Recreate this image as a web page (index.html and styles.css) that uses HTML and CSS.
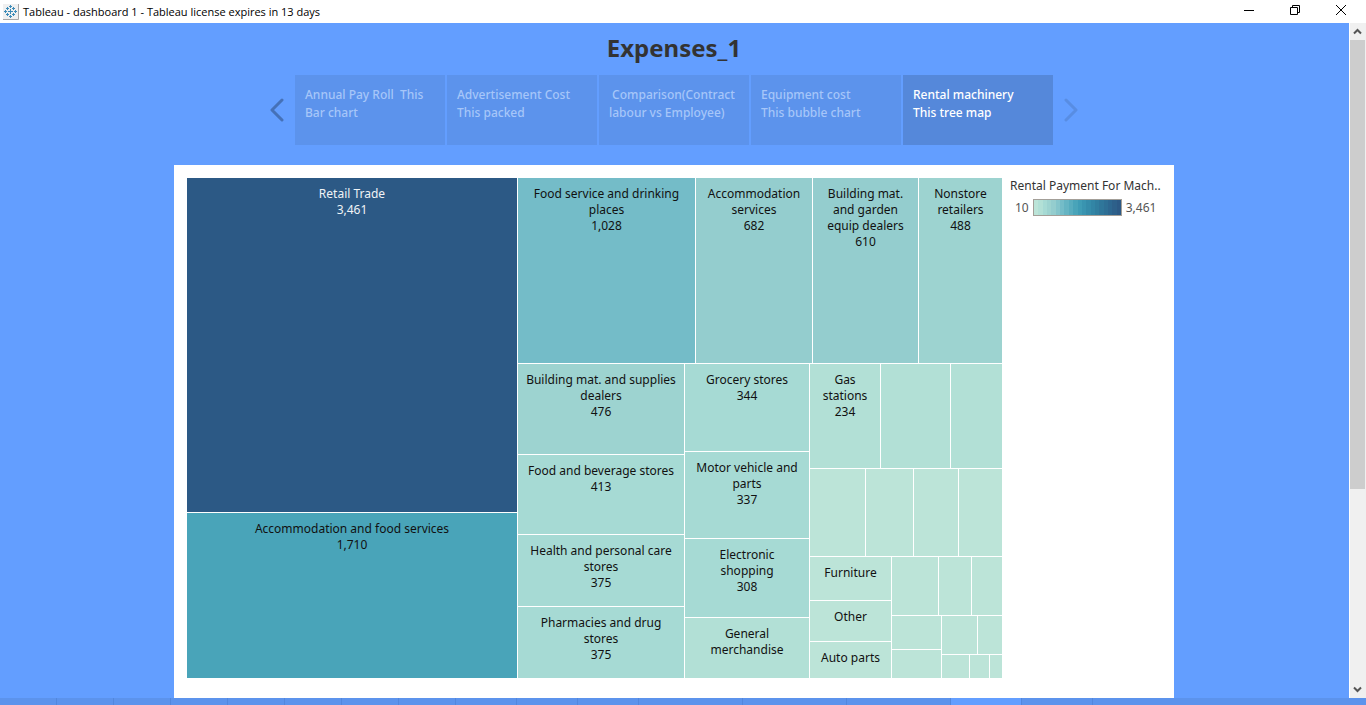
FILE: index.html
```html
<!DOCTYPE html>
<html lang="en">
<head>
<meta charset="utf-8">
<title>Tableau - dashboard 1</title>
<link rel="stylesheet" href="styles.css">
</head>
<body>
<header class="titlebar">
  <svg class="app-icon" viewBox="0 0 16 16" aria-hidden="true">
    <rect width="15" height="15" fill="#f0f0f0"/>
    <path d="M15.500 0v15.500H0" fill="none" stroke="#a8a8a8"/>
    <path d="M7.500 5v5M5 7.500h5M7.500 1v3M6 2.500h3M7.500 11v3M6 12.500h3M1 7.500h3M2.500 6v3M11 7.500h3M12.500 6v3M4.500 3v3M3 4.500h3M10.500 3v3M9 4.500h3M4.500 9v3M3 10.500h3M10.500 9v3M9 10.500h3" fill="none" stroke="#3b8bb8"/>
  </svg>
  <span class="window-title">Tableau - dashboard 1 - Tableau license expires in 13 days</span>
  <div class="window-controls">
    <button type="button" aria-label="Minimize"><svg width="12" height="12" viewBox="0 0 12 12"><path d="M1 6.500h10"/></svg></button>
    <button type="button" aria-label="Restore"><svg width="12" height="12" viewBox="0 0 12 12"><path d="M1.500 3.500h7v7h-7zM3.500 3.500v-2h7v7h-2"/></svg></button>
    <button type="button" aria-label="Close"><svg width="12" height="12" viewBox="0 0 12 12"><path d="M1 1l10 10M11 1L1 11"/></svg></button>
  </div>
</header>

<div class="workspace">
  <main class="story">
    <h1 class="story-title">Expenses_1</h1>
    <nav class="story-nav">
      <button type="button" class="arrow" aria-label="Previous"><svg width="16" height="24" viewBox="0 0 16 24"><path d="M13 2L3 12l10 10"/></svg></button>
      <div class="points">
        <button type="button" class="point">Annual Pay Roll  This
Bar chart</button>
        <button type="button" class="point">Advertisement Cost
This packed</button>
        <button type="button" class="point"> Comparison(Contract
labour vs Employee)</button>
        <button type="button" class="point">Equipment cost
This bubble chart</button>
        <button type="button" class="point active">Rental machinery
This tree map</button>
      </div>
      <button type="button" class="arrow disabled" aria-label="Next"><svg width="16" height="24" viewBox="0 0 16 24"><path d="M3 2l10 10L3 22"/></svg></button>
    </nav>

    <section class="sheet">
      <div class="treemap row">
        <div class="col" style="flex-grow:330">
          <div class="cell t10" style="flex-grow:334"><p>Retail Trade<br>3,461</p></div>
          <div class="cell t6" style="flex-grow:165"><p>Accommodation and food services<br>1,710</p></div>
        </div>
        <div class="col" style="flex-grow:484">
          <div class="row" style="flex-grow:185">
            <div class="cell t5" style="flex-grow:177"><p>Food service and drinking places<br>1,028</p></div>
            <div class="cell t4" style="flex-grow:116"><p>Accommodation services<br>682</p></div>
            <div class="cell t4" style="flex-grow:105"><p>Building mat. and garden equip dealers<br>610</p></div>
            <div class="cell t3" style="flex-grow:83"><p>Nonstore retailers<br>488</p></div>
          </div>
          <div class="row" style="flex-grow:314">
            <div class="col" style="flex-grow:166">
              <div class="cell t3" style="flex-grow:90"><p>Building mat. and supplies dealers<br>476</p></div>
              <div class="cell t2" style="flex-grow:79"><p>Food and beverage stores<br>413</p></div>
              <div class="cell t2" style="flex-grow:71"><p>Health and personal care stores<br>375</p></div>
              <div class="cell t2" style="flex-grow:71"><p>Pharmacies and drug stores<br>375</p></div>
            </div>
            <div class="col" style="flex-grow:124">
              <div class="cell t2" style="flex-grow:87"><p>Grocery stores<br>344</p></div>
              <div class="cell t2" style="flex-grow:86"><p>Motor vehicle and parts<br>337</p></div>
              <div class="cell t2" style="flex-grow:78"><p>Electronic<br>shopping<br>308</p></div>
              <div class="cell t1" style="flex-grow:60"><p>General merchandise</p></div>
            </div>
            <div class="col" style="flex-grow:192">
              <div class="row" style="flex-grow:104">
                <div class="cell t1" style="flex-grow:70"><p>Gas stations<br>234</p></div>
                <div class="cell t1" style="flex-grow:69"></div>
                <div class="cell t1" style="flex-grow:51"></div>
              </div>
              <div class="row" style="flex-grow:87">
                <div class="cell" style="flex-grow:55"></div>
                <div class="cell" style="flex-grow:47"></div>
                <div class="cell" style="flex-grow:44"></div>
                <div class="cell" style="flex-grow:43"></div>
              </div>
              <div class="row" style="flex-grow:121">
                <div class="col" style="flex-grow:81">
                  <div class="cell" style="flex-grow:43"><p>Furniture</p></div>
                  <div class="cell" style="flex-grow:40"><p>Other</p></div>
                  <div class="cell" style="flex-grow:36"><p>Auto parts</p></div>
                </div>
                <div class="col" style="flex-grow:110">
                  <div class="row" style="flex-grow:58">
                    <div class="cell" style="flex-grow:46"></div>
                    <div class="cell" style="flex-grow:32"></div>
                    <div class="cell" style="flex-grow:30"></div>
                  </div>
                  <div class="row" style="flex-grow:62">
                    <div class="col" style="flex-grow:49">
                      <div class="cell" style="flex-grow:33"></div>
                      <div class="cell" style="flex-grow:28"></div>
                    </div>
                    <div class="col" style="flex-grow:60">
                      <div class="row" style="flex-grow:38">
                        <div class="cell" style="flex-grow:35"></div>
                        <div class="cell" style="flex-grow:24"></div>
                      </div>
                      <div class="row" style="flex-grow:23">
                        <div class="cell" style="flex-grow:27"></div>
                        <div class="cell" style="flex-grow:19"></div>
                        <div class="cell" style="flex-grow:12"></div>
                      </div>
                    </div>
                  </div>
                </div>
              </div>
            </div>
          </div>
        </div>
      </div>
      <aside class="legend">
        <div class="legend-title">Rental Payment For Mach..</div>
        <div class="legend-scale">
          <span>10</span>
          <svg class="ramp" viewBox="0 0 20 1" preserveAspectRatio="none" shape-rendering="crispEdges" aria-hidden="true">
            <rect x="0" width="1" height="1" fill="#bce4d8"/><rect x="1" width="1" height="1" fill="#b2e0d6"/>
            <rect x="2" width="1" height="1" fill="#a6dad4"/><rect x="3" width="1" height="1" fill="#9dd3d0"/>
            <rect x="4" width="1" height="1" fill="#94cdce"/><rect x="5" width="1" height="1" fill="#85c5cb"/>
            <rect x="6" width="1" height="1" fill="#74bcc8"/><rect x="7" width="1" height="1" fill="#65b4c3"/>
            <rect x="8" width="1" height="1" fill="#57acbe"/><rect x="9" width="1" height="1" fill="#49a4b9"/>
            <rect x="10" width="1" height="1" fill="#3f9cb5"/><rect x="11" width="1" height="1" fill="#3994b0"/>
            <rect x="12" width="1" height="1" fill="#358caa"/><rect x="13" width="1" height="1" fill="#3285a5"/>
            <rect x="14" width="1" height="1" fill="#307e9f"/><rect x="15" width="1" height="1" fill="#2f769a"/>
            <rect x="16" width="1" height="1" fill="#2e6f95"/><rect x="17" width="1" height="1" fill="#2d6790"/>
            <rect x="18" width="1" height="1" fill="#2d608a"/><rect x="19" width="1" height="1" fill="#2c5985"/>
          </svg>
          <span>3,461</span>
        </div>
      </aside>
    </section>
  </main>

  <div class="scrollbar">
    <button type="button" aria-label="Scroll up"><svg width="9" height="7" viewBox="0 0 9 7"><path d="M1 5.500L4.500 2L8 5.500"/></svg></button>
    <div class="track"><div class="thumb"></div></div>
    <button type="button" aria-label="Scroll down"><svg width="9" height="7" viewBox="0 0 9 7"><path d="M1 1.500L4.500 5L8 1.500"/></svg></button>
  </div>
</div>

<footer class="sheet-tabs">
  <i></i><i></i><i></i><i></i><i></i><i></i><i></i><i></i>
  <i class="mid"></i><i class="mid"></i><i class="mid"></i>
  <i class="wide"></i><i class="wide"></i><i class="wide"></i>
  <i class="large current"></i><i class="large"></i>
</footer>
</body>
</html>
```

FILE: styles.css
```css
* { box-sizing: border-box; }

body {
  margin: 0;
  height: 100vh;
  display: flex;
  flex-direction: column;
  background: #639eff;
  font-family: "Noto Sans", "Open Sans", sans-serif;
  font-size: 12px;
  line-height: 16px;
  color: #111;
}

button {
  margin: 0;
  padding: 0;
  border: 0;
  background: none;
  font: inherit;
  color: inherit;
}

p { margin: 0; }

svg { display: block; }

.titlebar {
  display: flex;
  align-items: center;
  flex: none;
  height: 23px;
  padding: 0 2px 0 3px;
  gap: 4px;
  background: #fff;
  color: #000;
}
.app-icon { width: 16px; height: 16px; }
.window-title { flex: 1; font-family: "Open Sans", sans-serif; font-size: 11px; white-space: nowrap; }
.window-controls { display: flex; height: 100%; }
.window-controls button {
  width: 46px;
  padding-bottom: 3px;
  display: flex;
  align-items: center;
  justify-content: center;
}
.window-controls path { fill: none; stroke: #000; stroke-width: 1; }

.workspace { flex: 1; min-height: 0; display: flex; }

.story {
  flex: 1;
  min-width: 0;
  padding-right: 1px;
  display: flex;
  flex-direction: column;
  align-items: center;
}
.story-title {
  margin: 0;
  padding: 9px 0 11px;
  font-size: 24px;
  line-height: 32px;
  font-weight: 700;
  color: #333;
}
.story-nav { display: flex; align-items: center; gap: 10px; }
.arrow path {
  fill: none;
  stroke: #4571b8;
  stroke-width: 3;
  stroke-linecap: round;
  stroke-linejoin: round;
}
.arrow.disabled path { stroke: #588de3; }
.points { display: flex; gap: 2px; }
.point {
  width: 150px;
  height: 70px;
  padding: 11px 10px;
  display: flex;
  align-items: flex-start;
  background: #5c93ec;
  color: #a6c6f9;
  font-weight: 500;
  line-height: 18px;
  text-align: left;
  white-space: pre;
}
.point.active { background: #5588da; color: #fff; }

.sheet {
  flex: 1;
  width: 100%;
  max-width: 1000px;
  min-height: 0;
  margin-top: 20px;
  padding: 13px 13px 20px;
  display: flex;
  gap: 8px;
  background: #fff;
}

.treemap { flex-grow: 1; }
.row, .col { display: flex; flex-basis: 0; gap: 1px; min-width: 0; min-height: 0; }
.col { flex-direction: column; }
.cell {
  flex-basis: 0;
  min-width: 0;
  min-height: 0;
  overflow: hidden;
  text-align: center;
  background: #bce4d8;
}
.cell p { padding: 8px 6px 0; }
.t1 { background: #b2e0d6; }
.t2 { background: #a6dad4; }
.t3 { background: #9dd3d0; }
.t4 { background: #94cdce; }
.t5 { background: #74bcc8; }
.t6 { background: #49a4b9; }
.t10 { background: #2c5985; color: #f0f3f6; }

.legend { flex: none; width: 151px; color: #333; white-space: nowrap; }
.legend-scale {
  display: flex;
  align-items: center;
  gap: 4px;
  margin-top: 5px;
  padding-left: 5px;
  color: #555;
}
.ramp { width: 89px; height: 17px; border: 1px solid #a39f98; }

.scrollbar {
  flex: none;
  width: 17px;
  display: flex;
  flex-direction: column;
  background: #f0f0f0;
  border-left: 1px solid #fff;
}
.scrollbar button { height: 17px; display: flex; align-items: center; justify-content: center; padding-right: 1px; }
.scrollbar path { fill: none; stroke: #555; stroke-width: 2; }
.track { flex: 1; padding-right: 1px; }
.thumb { height: 70%; background: #cdcdcd; }

.sheet-tabs { flex: none; display: flex; height: 7px; background: #5c93ec; }
.sheet-tabs i { flex: none; width: 57px; border-right: 1px solid #5287dd; }
.sheet-tabs .mid { width: 61px; }
.sheet-tabs .wide { width: 104px; }
.sheet-tabs .large { width: 71px; }
.sheet-tabs .current { background: #639eff; }
```
